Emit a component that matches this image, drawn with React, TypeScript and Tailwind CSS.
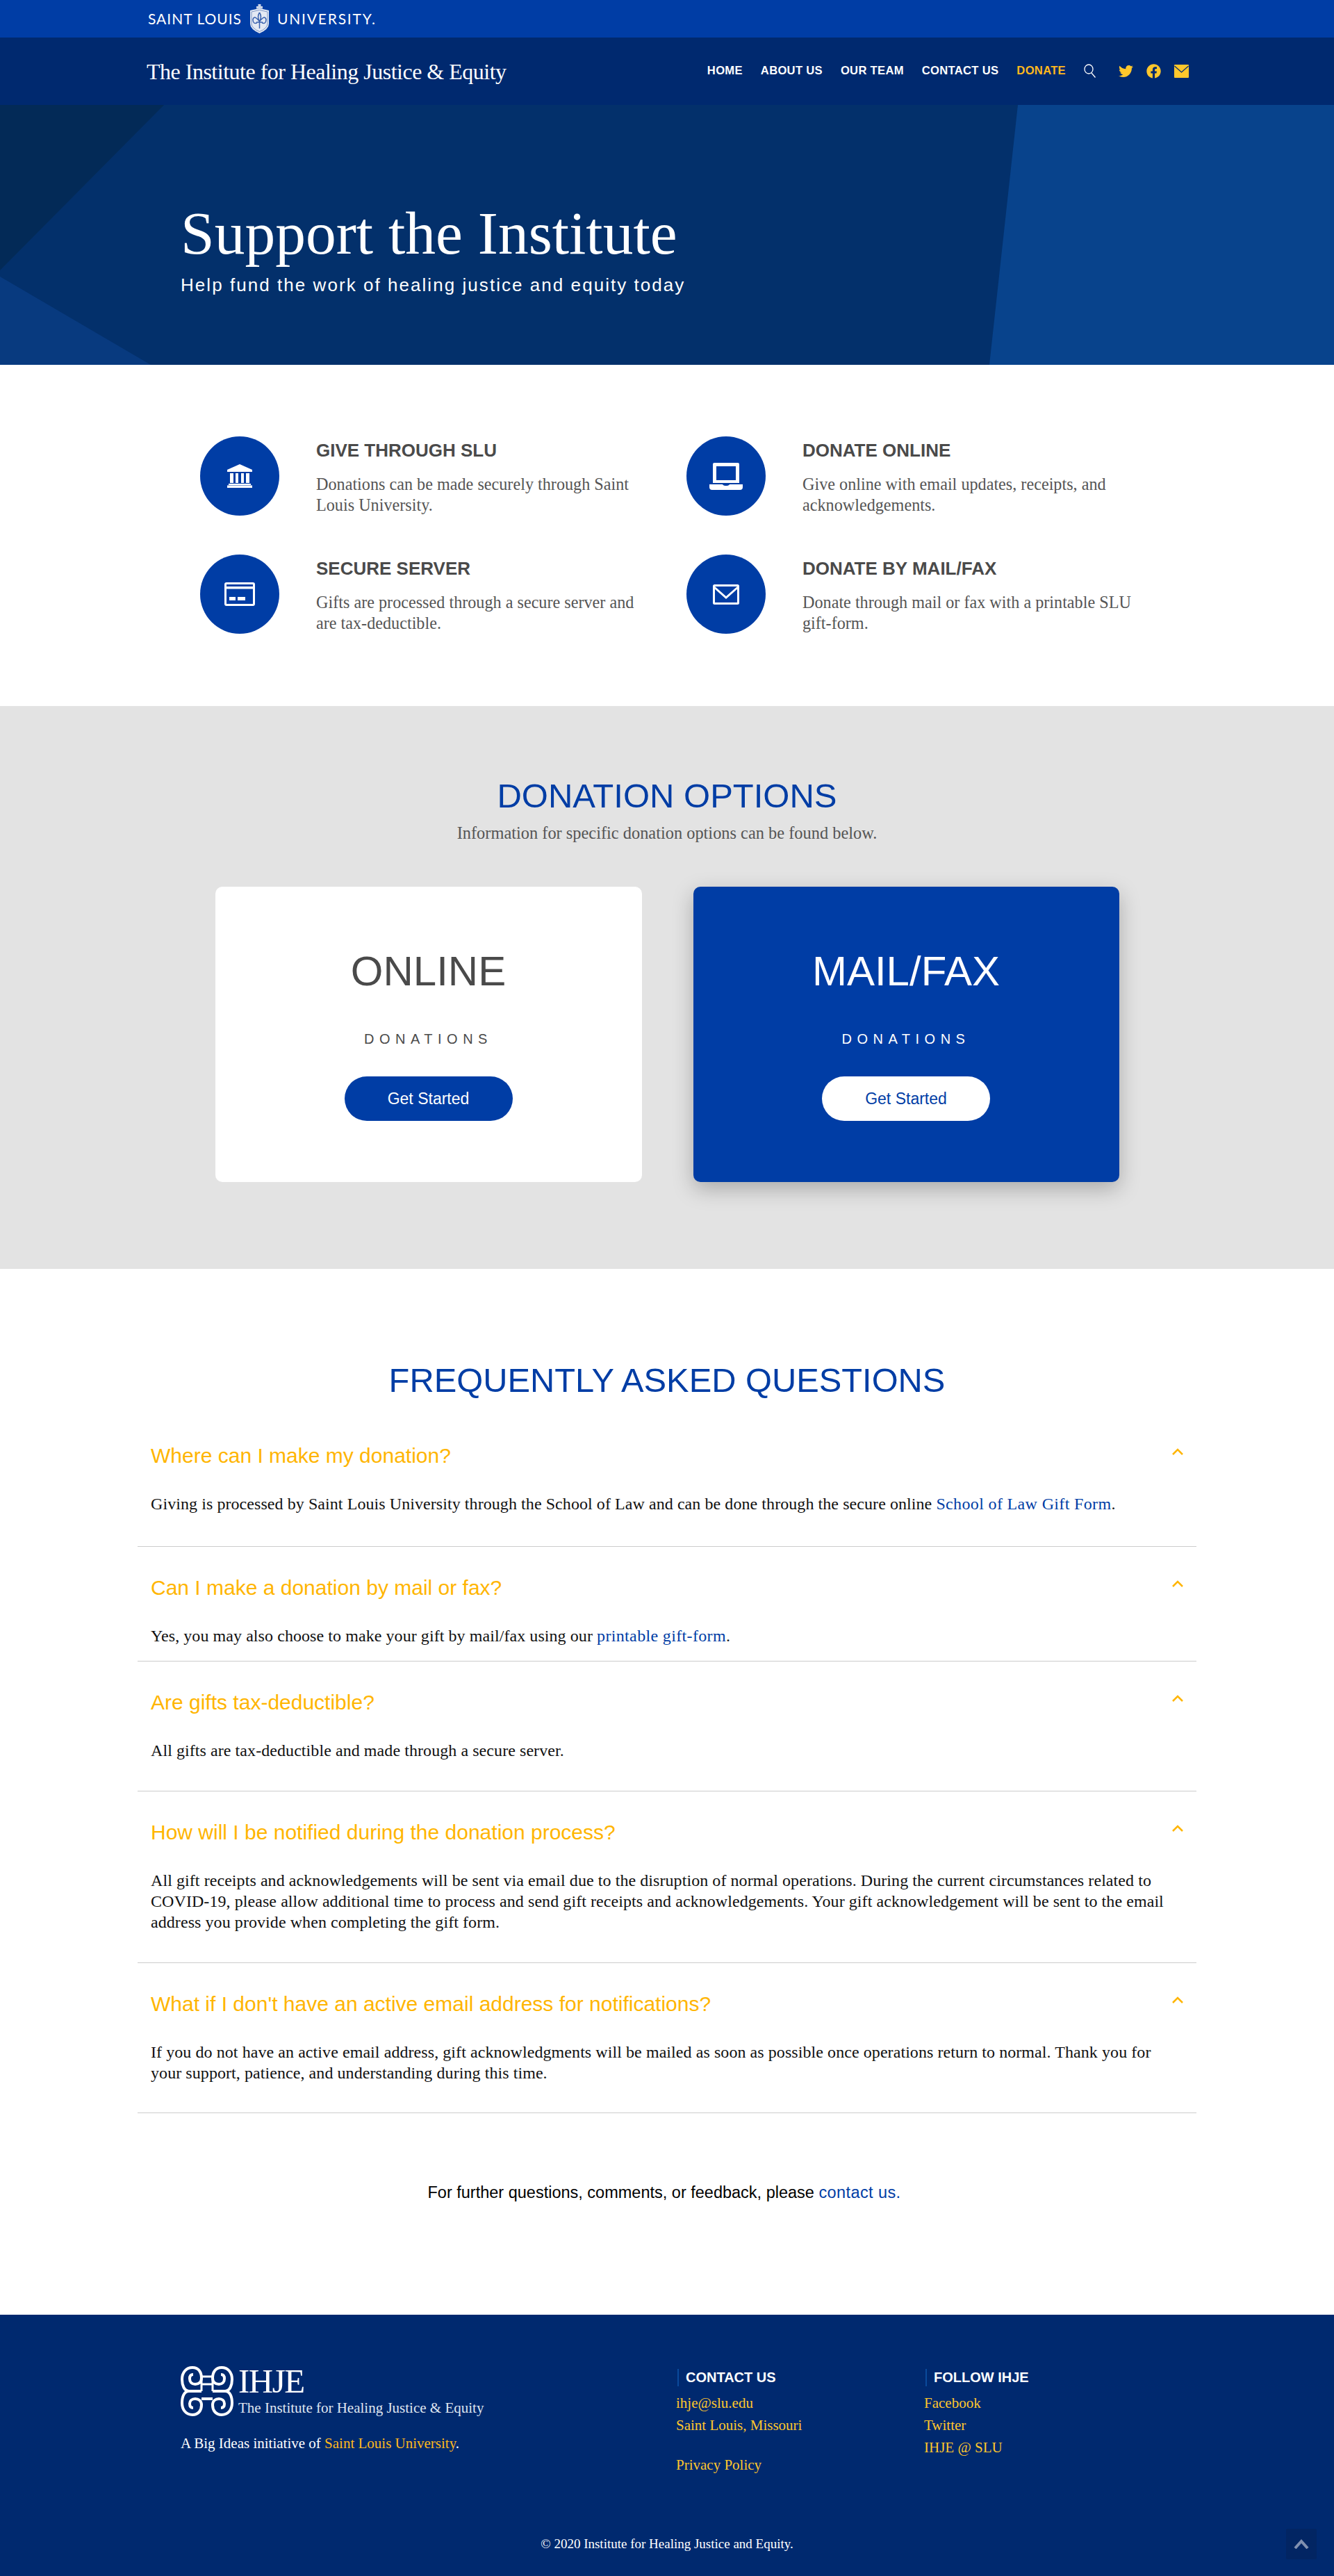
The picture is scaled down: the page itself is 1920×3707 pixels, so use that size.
import { FaTwitter, FaFacebook } from 'react-icons/fa';

const features = [
  { icon: 'bank', title: 'GIVE THROUGH SLU', text: 'Donations can be made securely through Saint Louis University.' },
  { icon: 'laptop', title: 'DONATE ONLINE', text: 'Give online with email updates, receipts, and acknowledgements.' },
  { icon: 'card', title: 'SECURE SERVER', text: 'Gifts are processed through a secure server and are tax-deductible.' },
  { icon: 'mail', title: 'DONATE BY MAIL/FAX', text: 'Donate through mail or fax with a printable SLU gift-form.' },
];

function FeatureIcon({ name }: { name: string }) {
  if (name === 'bank') {
    return (
      <svg width="38" height="34" viewBox="0 0 38 34" fill="white">
        <path d="M19 0 L37 8 V11 H1 V8 Z" />
        <rect x="5" y="13" width="5" height="14" />
        <rect x="13" y="13" width="4" height="14" />
        <rect x="21" y="13" width="4" height="14" />
        <rect x="28" y="13" width="5" height="14" />
        <rect x="3" y="28" width="32" height="2" />
        <rect x="1" y="30.5" width="36" height="3.5" />
      </svg>
    );
  }
  if (name === 'laptop') {
    return (
      <svg width="48" height="39" viewBox="0 0 48 39" fill="white">
        <path fillRule="evenodd" d="M7 0 H41 Q43 0 43 2 V29 H5 V2 Q5 0 7 0 Z M10 5 V25 H38 V5 Z" />
        <path d="M0 31 H19 Q20 33 24 33 Q28 33 29 31 H48 V35 Q48 39 44 39 H4 Q0 39 0 35 Z" />
      </svg>
    );
  }
  if (name === 'card') {
    return (
      <svg width="44" height="34" viewBox="0 0 44 34" fill="white">
        <path fillRule="evenodd" d="M3 0 H41 Q44 0 44 3 V31 Q44 34 41 34 H3 Q0 34 0 31 V3 Q0 0 3 0 Z M3 3 V6 H41 V3 Z M3 9.5 V31 H41 V9.5 Z" />
        <rect x="7" y="21" width="9" height="5" />
        <rect x="19" y="21" width="11" height="5" />
      </svg>
    );
  }
  return (
    <svg width="38" height="29" viewBox="0 0 38 29" fill="none" stroke="white" strokeWidth="3">
      <rect x="1.5" y="1.5" width="35" height="26" rx="1" />
      <path d="M2 4 L19 19 L36 4" />
    </svg>
  );
}

const faqs = [
  {
    q: 'Where can I make my donation?',
    body: (
      <>
        Giving is processed by Saint Louis University through the School of Law and can be done through the secure online{' '}
        <span className="text-[#003da5] tracking-[0.35px]">School of Law Gift Form</span>.
      </>
    ),
    cls: 'pb-[46px]',
  },
  {
    q: 'Can I make a donation by mail or fax?',
    body: (
      <>
        Yes, you may also choose to make your gift by mail/fax using our{' '}
        <span className="text-[#003da5] tracking-[0.35px]">printable gift-form</span>.
      </>
    ),
    cls: 'pb-[21px]',
  },
  { q: 'Are gifts tax-deductible?', body: <>All gifts are tax-deductible and made through a secure server.</>, cls: 'pb-[43px]' },
  {
    q: 'How will I be notified during the donation process?',
    body: (
      <>
        All gift receipts and acknowledgements will be sent via email due to the disruption of normal operations. During the current circumstances related to COVID-19, please allow additional time to process and send gift receipts and acknowledgements. Your gift acknowledgement will be sent to the email address you provide when completing the gift form.
      </>
    ),
    cls: 'pb-[43px]',
  },
  {
    q: "What if I don't have an active email address for notifications?",
    body: (
      <>
        If you do not have an active email address, gift acknowledgments will be mailed as soon as possible once operations return to normal. Thank you for your support, patience, and understanding during this time.
      </>
    ),
    cls: 'pb-[42px]',
  },
];

function KnotLogo() {
  return (
    <svg width="76" height="72" viewBox="0 0 76 72" fill="none" stroke="white" strokeWidth="4">
      <path d="M30 36 H12 C5 36 2 27 2 19 C2 9 8 2 17 2 C26 2 30 9 30 17 C30 23 26 26 21 26 C16 26 13 23 13 18 C13 14 15 12 18 12" />
      <path d="M46 36 H64 C71 36 74 27 74 19 C74 9 68 2 59 2 C50 2 46 9 46 17 C46 23 50 26 55 26 C60 26 63 23 63 18 C63 14 61 12 58 12" />
      <path d="M30 17 V36 M46 17 V36 M30 15 H46 M30 26 H46" strokeWidth="3" />
      <path d="M12 36 C5 36 2 44 2 53 C2 63 8 70 17 70 C26 70 30 63 30 56 C30 50 26 47 21 47 C16 47 13 50 13 54 C13 58 15 60 18 60" />
      <path d="M64 36 C71 36 74 44 74 53 C74 63 68 70 59 70 C50 70 46 63 46 56 C46 50 50 47 55 47 C60 47 63 50 63 54 C63 58 61 60 58 60" />
      <path d="M30 47 H46" />
    </svg>
  );
}

function Chevron() {
  return (
    <svg width="16" height="10" viewBox="0 0 16 10" fill="none" stroke="#ffb500" strokeWidth="2.5">
      <path d="M1 9 L8 2 L15 9" />
    </svg>
  );
}

export default function App() {
  return (
    <div className="font-['Liberation_Serif',serif] bg-white w-full">
      {/* slu bar */}
      <div className="h-[54px] bg-[#003da5] pl-[213px] flex items-center text-white font-['Lato',sans-serif] text-[21px] tracking-[1px]">
        <span>SAINT LOUIS</span>
        <svg className="mx-[11px]" width="29" height="42" viewBox="0 0 29 42">
          <path d="M1 9 L14.5 6 L28 9 V28 Q28 36 14.5 42 Q1 36 1 28 Z" fill="#e4e9f3" />
          <path d="M10 6.5 V3 H12.5 V0 H16.5 V3 H19 V6.5 Z" fill="#c9d3e6" />
          <path d="M3 11 L14.5 8.5 L26 11 V28 Q26 34.5 14.5 39.5 Q3 34.5 3 28 Z" fill="none" stroke="#7f97c6" strokeWidth="1" />
          <path d="M14.5 12 Q18.5 18 14.5 25 Q10.5 18 14.5 12 M14.5 25 Q22 15 24 22 Q24 29 18 27 M14.5 25 Q7 15 5 22 Q5 29 11 27 M10 26 H19 M14.5 25 V35" fill="none" stroke="#3a62ae" strokeWidth="1.5" />
        </svg>
        <span className="tracking-[1.8px]">UNIVERSITY.</span>
      </div>

      {/* main nav */}
      <div className="h-[97px] bg-[#00296f] pl-[211px] pr-[209px] flex items-center justify-between">
        <span className="text-white text-[32px] tracking-[-0.5px]">The Institute for Healing Justice &amp; Equity</span>
        <div className="flex items-center font-['Liberation_Sans',sans-serif] text-[16.6px] tracking-[0.3px] font-bold text-white gap-[26px]">
          <span>HOME</span>
          <span>ABOUT US</span>
          <span>OUR TEAM</span>
          <span>CONTACT US</span>
          <span className="text-[#ffb81c]">DONATE</span>
          <svg width="18" height="20" viewBox="0 0 18 20" fill="none" stroke="white" strokeWidth="1.3">
            <ellipse cx="7" cy="7.5" rx="6" ry="6.5" />
            <path d="M11 13 L16.5 19.5" />
          </svg>
          <div className="flex items-center gap-[19px] ml-[6px] text-[#ffc72c]">
            <FaTwitter size={21} />
            <FaFacebook size={21} />
            <svg width="21" height="19" viewBox="0 0 21 19">
              <rect width="21" height="19" rx="1" fill="#ffc72c" />
              <path d="M0.5 2 L10.5 11 L20.5 2" fill="none" stroke="#00296f" strokeWidth="1.2" />
            </svg>
          </div>
        </div>
      </div>

      {/* hero */}
      <div className="relative h-[374px] bg-[#03306b] pl-[260px] pt-[140px] overflow-hidden">
        <svg className="absolute inset-0" width="1920" height="374" viewBox="0 0 1920 374">
          <polygon points="0,0 236,0 0,238" fill="#032a57" />
          <polygon points="0,247 217,374 0,374" fill="#083a7f" />
          <polygon points="1465,0 1920,0 1920,374 1424,374" fill="#08438c" />
        </svg>
        <h1 className="relative text-white text-[87.5px] leading-[90px]">Support the Institute</h1>
        <p className="relative font-['Liberation_Sans',sans-serif] text-white text-[26px] leading-[39px] tracking-[2.05px] mt-[10px]">
          Help fund the work of healing justice and equity today
        </p>
      </div>

      {/* features */}
      <div className="h-[491px] pl-[288px] pt-[103px]">
        <div className="grid grid-cols-[700px_700px] gap-y-[56px]">
          {features.map(f => (
            <div key={f.title} className="flex h-[114px]">
              <div className="w-[114px] h-[114px] rounded-full bg-[#003da5] flex items-center justify-center shrink-0">
                <FeatureIcon name={f.icon} />
              </div>
              <div className="ml-[53px] w-[485px] pt-[3px]">
                <h3 className="font-['Liberation_Sans',sans-serif] font-bold text-[26px] leading-[34px] text-[#4a4a4a]">{f.title}</h3>
                <p className="text-[24.2px] leading-[30px] text-[#555555] mt-[17px]">{f.text}</p>
              </div>
            </div>
          ))}
        </div>
      </div>

      {/* donation options */}
      <div className="h-[810px] bg-[#e3e3e3] pt-[100px]">
        <h2 className="font-['Liberation_Sans',sans-serif] text-[49px] leading-[58px] text-center text-[#003da5]">DONATION OPTIONS</h2>
        <p className="text-[24.4px] leading-[30px] text-[#555555] text-center mt-[10px]">Information for specific donation options can be found below.</p>
        <div className="flex justify-center gap-[74px] mt-[62px] font-['Liberation_Sans',sans-serif]">
          <div className="w-[614px] h-[425px] bg-white rounded-[10px] flex flex-col items-center pt-[87px]">
            <div className="text-[60px] leading-[70px] text-[#4a4a4a]">ONLINE</div>
            <div className="text-[20px] leading-[24px] tracking-[7.5px] text-[#4a4a4a] mt-[50px]">DONATIONS</div>
            <div className="w-[242px] h-[64px] rounded-full bg-[#003da5] text-white text-[23px] flex items-center justify-center mt-[42px]">Get Started</div>
          </div>
          <div className="w-[613px] h-[425px] bg-[#003da5] rounded-[10px] shadow-[0_10px_30px_rgba(0,0,0,0.25)] flex flex-col items-center pt-[87px]">
            <div className="text-[60px] leading-[70px] text-white">MAIL/FAX</div>
            <div className="text-[20px] leading-[24px] tracking-[7.5px] text-white mt-[50px]">DONATIONS</div>
            <div className="w-[242px] h-[64px] rounded-full bg-white text-[#003da5] text-[23px] flex items-center justify-center mt-[42px]">Get Started</div>
          </div>
        </div>
      </div>

      {/* faq */}
      <div className="h-[1505px] pt-[131px]">
        <h2 className="font-['Liberation_Sans',sans-serif] text-[48.8px] leading-[58px] text-center text-[#003da5]">FREQUENTLY ASKED QUESTIONS</h2>
        <div className="mx-[198px] mt-[21px]">
          {faqs.map(item => (
            <div key={item.q} className={`border-b border-[#cccccc] px-[19px] pt-[40px] ${item.cls}`}>
              <div className="flex justify-between items-start">
                <span className="font-['Liberation_Sans',sans-serif] text-[30px] leading-[38px] text-[#ffb500]">{item.q}</span>
                <span className="pt-[8px]"><Chevron /></span>
              </div>
              <p className="text-[24px] leading-[30px] tracking-[0.07px] text-[#111111] mt-[35px]">{item.body}</p>
            </div>
          ))}
        </div>
        <p className="font-['Liberation_Sans',sans-serif] text-[23.5px] leading-[30px] text-black text-center mt-[99px]">
          For further questions, comments, or feedback, please{' '}
          <span className="text-[#003da5] tracking-[0.4px] mr-[8px]">contact us.</span>
        </p>
      </div>

      {/* footer */}
      <div className="relative h-[376px] bg-[#00296f] pt-[74px]">
        <div className="flex pl-[260px]">
          <div className="w-[713px]">
            <div className="flex">
              <KnotLogo />
              <div className="ml-[7px] text-white">
                <div className="text-[49px] leading-[44px] tracking-[-1.5px]">IHJE</div>
                <div className="text-[21px] leading-[24px] text-[#dfe5f0] mt-[4px]">The Institute for Healing Justice &amp; Equity</div>
              </div>
            </div>
            <p className="text-[21px] leading-[30px] text-white mt-[24px]">
              A Big Ideas initiative of <span className="text-[#ffb81c]">Saint Louis University</span>.
            </p>
          </div>
          <div className="w-[357px] pt-[4px]">
            <div className="ml-[2px] pl-[10px] border-l-2 border-[#0a4a9c] font-['Liberation_Sans',sans-serif] font-bold text-[20px] leading-[25px] text-white">CONTACT US</div>
            <div className="text-[21px] leading-[32px] text-[#ffc72c] mt-[8px]">
              <div>ihje@slu.edu</div>
              <div>Saint Louis, Missouri</div>
              <div className="mt-[25px]">Privacy Policy</div>
            </div>
          </div>
          <div className="pt-[4px]">
            <div className="ml-[2px] pl-[10px] border-l-2 border-[#0a4a9c] font-['Liberation_Sans',sans-serif] font-bold text-[20px] leading-[25px] text-white">FOLLOW IHJE</div>
            <div className="text-[21px] leading-[32px] text-[#ffc72c] mt-[8px]">
              <div>Facebook</div>
              <div>Twitter</div>
              <div>IHJE @ SLU</div>
            </div>
          </div>
        </div>
        <p className="absolute bottom-[32px] inset-x-0 text-center text-white text-[19px] leading-[28px]">© 2020 Institute for Healing Justice and Equity.</p>
        <div className="absolute right-[25px] bottom-[24px] w-[44px] h-[44px] rounded-[2px] bg-[#022563] flex items-center justify-center">
          <svg width="22" height="14" viewBox="0 0 22 14" fill="none" stroke="#8090b0" strokeWidth="4">
            <path d="M2 13 L11 3 L20 13" />
          </svg>
        </div>
      </div>
    </div>
  );
}
